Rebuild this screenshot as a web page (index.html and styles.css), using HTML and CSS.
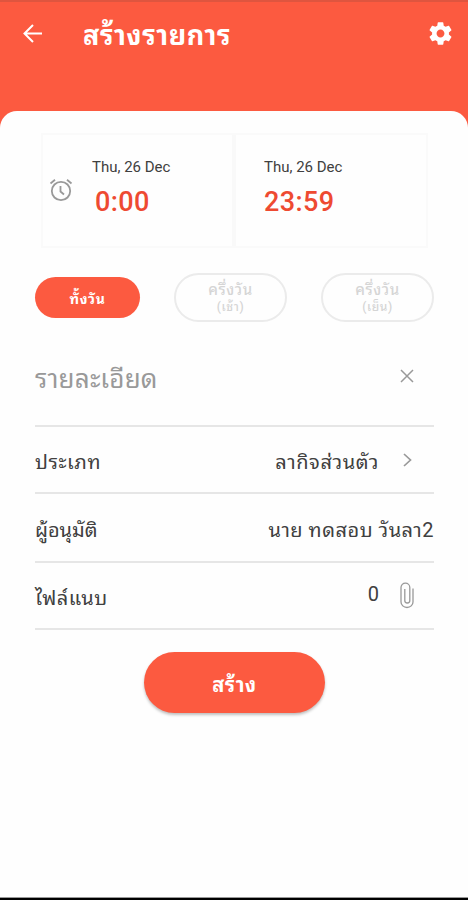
FILE: index.html
```html
<!DOCTYPE html>
<html lang="th">
<head>
<meta charset="UTF-8" />
<meta name="viewport" content="width=device-width, initial-scale=1" />
<title>สร้างรายการ</title>
<link rel="stylesheet" href="styles.css">
</head>
<body>
  <header class="topbar">
    <button type="button" class="icon-button" aria-label="ย้อนกลับ">
      <svg class="icon-back" viewBox="0 0 20 20"><path d="M19 9.500H2M10 1L1.500 9.500l8.500 8.500" /></svg>
    </button>
    <h1 class="title">สร้างรายการ</h1>
    <button type="button" class="icon-button" aria-label="ตั้งค่า">
      <svg class="icon-gear" viewBox="0 0 24 24"><path d="M19.430 12.980c.04-.32.07-.64.07-.98s-.03-.66-.07-.98l2.110-1.650c.19-.15.24-.42.12-.64l-2-3.460c-.12-.22-.39-.3-.61-.22l-2.490 1c-.52-.4-1.080-.73-1.690-.98l-.38-2.650C14.460 2.180 14.250 2 14 2h-4c-.25 0-.46.18-.49.42l-.38 2.650c-.61.25-1.170.59-1.690.98l-2.490-1c-.23-.09-.49 0-.61.22l-2 3.460c-.13.22-.07.49.12.64l2.110 1.650c-.04.32-.07.65-.07.98s.03.66.07.98l-2.110 1.650c-.19.15-.24.42-.12.64l2 3.460c.12.22.39.3.61.22l2.490-1c.52.4 1.080.73 1.690.98l.38 2.650c.03.24.24.42.49.42h4c.25 0 .46-.18.49-.42l.38-2.650c.61-.25 1.170-.59 1.690-.98l2.490 1c.23.09.49 0 .61-.22l2-3.460c.12-.22.07-.49-.12-.64l-2.110-1.650zM12 15.500c-1.930 0-3.500-1.570-3.500-3.500s1.570-3.500 3.500-3.500 3.500 1.570 3.500 3.500-1.570 3.500-3.500 3.500z" /></svg>
    </button>
  </header>

  <main class="sheet">
    <div class="period">
      <div class="period-card">
        <svg class="icon-alarm" viewBox="0 0 24 24"><circle cx="12" cy="13" r="9.200" /><path d="M11.500 8v5.500l3.500 3M1.500 5.500L6 1.800M22.500 5.500L18 1.800" /></svg>
        <div class="moment">
          <div class="date">Thu, 26 Dec</div>
          <div class="time time-start">0:00</div>
        </div>
      </div>
      <div class="period-card period-end">
        <div class="moment">
          <div class="date">Thu, 26 Dec</div>
          <div class="time">23:59</div>
        </div>
      </div>
    </div>

    <div class="options">
      <button type="button" class="option option-active">ทั้งวัน</button>
      <button type="button" class="option">ครึ่งวัน<small>(เช้า)</small></button>
      <button type="button" class="option">ครึ่งวัน<small>(เย็น)</small></button>
    </div>

    <div class="row row-detail">
      <span class="placeholder">รายละเอียด</span>
      <svg class="icon-close" viewBox="0 0 14 14"><path d="M1 1l12 12M13 1L1 13" /></svg>
    </div>
    <div class="row row-type">
      <span class="label label-type">ประเภท</span>
      <span class="value value-type">ลากิจส่วนตัว</span>
      <svg class="icon-chevron" viewBox="0 0 9 14"><path d="M1 1l6.500 6L1 13" /></svg>
    </div>
    <div class="row row-approver">
      <span class="label label-approver">ผู้อนุมัติ</span>
      <span class="value value-approver">นาย ทดสอบ วันลา2</span>
    </div>
    <div class="row row-file">
      <span class="label label-file">ไฟล์แนบ</span>
      <span class="value value-file">0</span>
      <svg class="icon-clip" viewBox="0 0 14 26"><path d="M13 6v13.500a6 5.500 0 0 1-12 0V5a4.200 4.200 0 0 1 8.800 0v13a2.500 2.500 0 0 1-5 0V6.500" /></svg>
    </div>

    <button type="button" class="submit">สร้าง</button>
  </main>
</body>
</html>
```
FILE: styles.css
```css
:root {
  --orange: #fc5a40;
  --time: #ee4a31;
  --text: #404040;
  --gray: #999;
  --line: #e6e6e6;
}

* {
  box-sizing: border-box;
}

body {
  margin: 0;
  height: 900px;
  display: flex;
  flex-direction: column;
  overflow: hidden;
  background: var(--orange);
  border-top: 2px solid #df553f;
  border-bottom: 2px solid #000;
  font-family: Roboto, "Noto Sans Thai Looped", "Droid Sans Thai", Loma, "Noto Sans Thai", "Noto Sans", sans-serif;
  color: var(--text);
}

button {
  font-family: inherit;
  border: none;
  padding: 0;
}

svg {
  display: block;
  flex: none;
  fill: none;
  stroke: var(--gray);
}

.topbar {
  flex: none;
  height: 109px;
  padding: 18px 14px 0 23px;
  display: flex;
  align-items: flex-start;
}

.icon-button {
  height: 27px;
  display: flex;
  align-items: center;
  background: none;
}

.icon-back {
  width: 20px;
  height: 20px;
  stroke: #fff;
  stroke-width: 2;
}

.icon-gear {
  width: 27px;
  height: 27px;
  fill: #fff;
  stroke: none;
}

.title {
  flex: 1;
  margin: 0 0 0 40px;
  font-size: 27px;
  line-height: 32px;
  font-weight: 700;
  letter-spacing: 0.6px;
  color: #fff;
  white-space: nowrap;
}

.sheet {
  flex: 1;
  padding: 22px 34px 0 35px;
  background: #fefefe;
  border-radius: 17px 17px 0 0;
  border-bottom: 1px solid #999;
}

.period {
  display: flex;
  gap: 4px;
  height: 115px;
  margin: 0 6px;
  background: #f9f9f9;
  border: 2px solid #fafafa;
}

.period-card {
  flex: none;
  width: 189px;
  display: flex;
  align-items: flex-start;
  padding: 22px 0 0 6px;
  background: #fefefe;
}

.period-end {
  flex: 1;
  padding-left: 28px;
}

.icon-alarm {
  width: 24px;
  height: 24px;
  margin: 21px 19px 0 0;
  stroke-width: 1.8;
}

.date {
  font-size: 15px;
  line-height: 20px;
}

.time {
  margin-top: 9px;
  font-size: 27px;
  line-height: 33px;
  font-weight: 500;
  letter-spacing: 0.4px;
  color: var(--time);
}

.time-start {
  padding-left: 3px;
}

.options {
  display: flex;
  justify-content: space-between;
  align-items: center;
  height: 49px;
  margin-top: 25px;
}

.option {
  width: 113px;
  height: 49px;
  padding-top: 3px;
  border: 2px solid #ebebeb;
  border-radius: 25px;
  background: none;
  color: #d5d5d5;
  font-size: 15px;
  line-height: 17px;
  font-weight: 500;
  letter-spacing: 0.6px;
}

.option small {
  display: block;
  font-size: 12px;
}

.option-active {
  width: 105px;
  height: 41px;
  padding-top: 4px;
  border: none;
  background: var(--orange);
  color: #fff;
  font-size: 14px;
  font-weight: 700;
}

.row {
  display: flex;
  align-items: center;
  border-bottom: 2px solid var(--line);
  font-size: 20px;
  white-space: nowrap;
}

.row-detail {
  height: 105px;
  padding: 4px 20px 0 0;
}

.row-type {
  height: 67px;
  padding-right: 22px;
}

.row-approver {
  height: 69px;
}

.row-file {
  height: 67px;
  padding-right: 20px;
}

.placeholder {
  font-size: 26px;
  letter-spacing: 0.2px;
  color: var(--gray);
  margin-right: auto;
}

.label {
  margin-right: auto;
}

.label-type {
  letter-spacing: 0.6px;
}

.label-file {
  letter-spacing: 0.5px;
}

.value-type {
  letter-spacing: 0.6px;
}

.value-approver {
  letter-spacing: 0.5px;
}

.value-file {
  padding-bottom: 3px;
}

.icon-close {
  width: 14px;
  height: 14px;
  stroke-width: 1.5;
}

.icon-chevron {
  width: 9px;
  height: 14px;
  margin-left: 24px;
  stroke-width: 1.7;
}

.icon-clip {
  width: 14px;
  height: 27px;
  margin-left: 21px;
  stroke-width: 1.3;
}

.submit {
  display: block;
  width: 181px;
  height: 61px;
  margin: 22px auto 0;
  border-radius: 31px;
  background: var(--orange);
  box-shadow: 0 2px 3px rgba(0, 0, 0, 0.25);
  color: #fff;
  font-size: 20px;
  font-weight: 700;
  letter-spacing: 0.6px;
}
```
